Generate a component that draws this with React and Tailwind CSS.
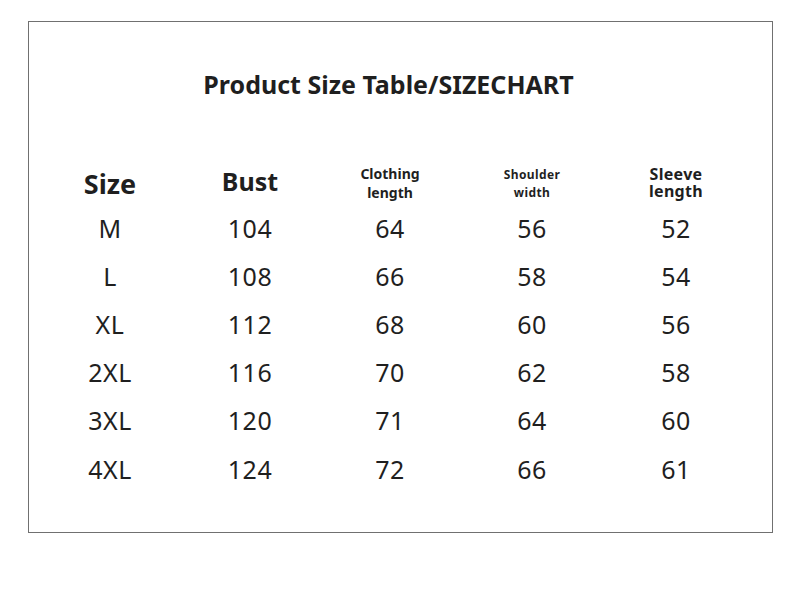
import React from "react";

const rows = [
  ["M", "104", "64", "56", "52"],
  ["L", "108", "66", "58", "54"],
  ["XL", "112", "68", "60", "56"],
  ["2XL", "116", "70", "62", "58"],
  ["3XL", "120", "71", "64", "60"],
  ["4XL", "124", "72", "66", "61"],
];

export default function App() {
  return (
    <div className="w-[800px] h-[612px] bg-white pt-[21px] pl-[28px] font-['Noto_Sans',sans-serif] text-[#1f1f1f]">
      <div className="w-[745px] h-[512px] border border-[#707070] flex flex-col">
        {/* title */}
        <div className="pt-[45px] pr-[24px] text-center text-[25px] font-bold leading-[34px]">
          Product Size Table/SIZECHART
        </div>

        <div className="mt-[57px] pl-[11px] grid grid-cols-[140px_140px_140px_144px_144px]">
          {/* header */}
          <div className="h-[46px] flex items-center justify-center text-[27px] font-bold pt-[6px]">Size</div>
          <div className="h-[46px] flex items-center justify-center text-[25px] font-bold pt-[2px]">Bust</div>
          <div className="h-[46px] flex flex-col items-center justify-center text-[14px] font-bold leading-[19px] pt-[4px]">
            <span>Clothing</span>
            <span>length</span>
          </div>
          <div className="h-[46px] flex flex-col items-center justify-center text-[12px] font-bold leading-[18px] tracking-[0.4px] pt-[5px]">
            <span>Shoulder</span>
            <span>width</span>
          </div>
          <div className="h-[46px] flex flex-col items-center justify-center text-[16px] font-bold leading-[17px] tracking-[0.3px] pt-[4px]">
            <span>Sleeve</span>
            <span>length</span>
          </div>

          {rows.map((r) =>
            r.map((v, i) => (
              <div
                key={r[0] + i}
                className="h-[48.2px] flex items-center justify-center text-[25px] leading-none tracking-[0.5px]"
              >
                {v}
              </div>
            ))
          )}
        </div>
      </div>
    </div>
  );
}
